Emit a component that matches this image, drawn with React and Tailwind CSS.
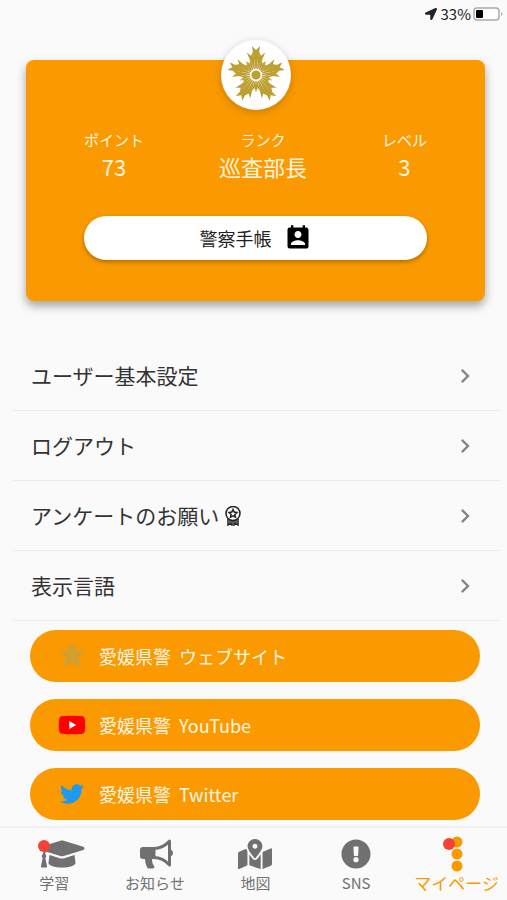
import { FaExclamationCircle, FaGraduationCap, FaLocationArrow, FaMapMarkedAlt, FaTwitter, FaYoutube } from 'react-icons/fa';
import { MdChevronRight, MdPermContactCalendar } from 'react-icons/md';

// Ray lengths of one arm, repeated five times around the emblem
const RAYS = [29, 24, 17, 17, 24];

function Emblem({ className, color, gap }) {
    const rays = Array.from({ length: 25 }, (_, i) => ({ angle: i * 14.4, r: RAYS[i % 5] }));

    return (
        <svg className={className} viewBox="-30 -30 60 60" aria-hidden="true">
            {rays.map(({ angle, r }) => {
                const w = r * 0.14;
                return (
                    <path
                        key={angle}
                        transform={`rotate(${angle})`}
                        fill={color}
                        d={`M-0.5 -6 L${-w * 0.72} ${-r * 0.75} L${-w} ${-r} L0 ${-r + 4} L${w} ${-r} L${w * 0.72} ${-r * 0.75} L0.5 -6 Z`}
                    />
                );
            })}
            <circle r="6" fill={gap} />
            <circle r="4.6" fill={color} />
        </svg>
    );
}

function RosetteIcon() {
    return (
        <svg className="w-5 h-5" viewBox="0 0 20 20" fill="none" stroke="#222" strokeWidth="1.5" aria-hidden="true">
            <circle cx="10" cy="7.5" r="7" />
            <path d="M10 3.6l1.2 2.5 2.7.4-2 1.9.5 2.7-2.4-1.3-2.4 1.3.5-2.7-2-1.9 2.7-.4z" />
            <path d="M5 13v6l2.4-1.4L9 19v-5M15 13v6l-2.4-1.4L11 19v-5M7 14v3M13 14v3" />
        </svg>
    );
}

function MegaphoneIcon() {
    return (
        <svg className="w-[34px] h-[30px]" viewBox="0 0 34 30" fill="currentColor" aria-hidden="true">
            <path d="M3 8h12v12H3a3 3 0 0 1-3-3v-6a3 3 0 0 1 3-3z" />
            <path d="M5 19h7c0 3 0 5 2 8 1 1.500 0 2.500-1 2.500H8.500C7 29.500 5 24 5 19z" />
            <path d="M14 9.500c6 0 11-2.500 15.500-7.500v24c-4.500-5-9.500-7.500-15.500-7.500z" fill="none" stroke="currentColor" strokeWidth="3" strokeLinejoin="round" />
            <path d="M30 10.500c4 .5 4 6.500 0 7z" />
        </svg>
    );
}

function StatusBar() {
    return (
        <div className="flex items-center justify-end h-7 pr-1 text-[15px] text-[#222]">
            <FaLocationArrow className="w-3 h-3 mr-1" />
            <span>33%</span>
            <svg className="w-[30px] h-4 ml-0.5" viewBox="0 0 30 16" aria-hidden="true">
                <rect x="1" y="2" width="25" height="12" rx="3" fill="#fff" stroke="#aaa" strokeWidth="1.4" />
                <rect x="3" y="4" width="7" height="8" rx="1" fill="#000" />
                <path d="M28 6v4c2-1 2-3 0-4z" fill="#aaa" />
            </svg>
        </div>
    );
}

function Stat({ label, value }) {
    return (
        <div className="flex flex-col items-center">
            <dt className="text-[15px] leading-5">{label}</dt>
            <dd className="text-[22px] leading-8">{value}</dd>
        </div>
    );
}

function ProfileCard() {
    return (
        <section className="relative mt-8 ml-[26px] mr-[22px] px-[58px] pt-[70px] pb-[41px] rounded-lg bg-[#fa9a00] text-[#fff5e4] shadow-[0_5px_10px_rgba(0,0,0,0.35)]">
            {/* Emblem sits over the top edge of the card */}
            <div className="absolute left-1/2 -top-5 -translate-x-1/2 flex items-center justify-center w-[70px] h-[70px] rounded-full bg-white shadow-[0_2px_8px_rgba(0,0,0,0.2)]">
                <Emblem className="w-[60px] h-[60px]" color="#bd9f32" gap="#fff" />
            </div>
            <dl className="flex justify-between">
                <Stat label="ポイント" value="73" />
                <Stat label="ランク" value="巡査部長" />
                <Stat label="レベル" value="3" />
            </dl>
            <button className="flex items-center justify-center gap-3 w-full h-11 mt-[34px] rounded-full bg-white text-[#222] text-lg shadow-[0_2px_4px_rgba(0,0,0,0.3)]">
                警察手帳
                <MdPermContactCalendar className="w-7 h-7 text-black" />
            </button>
        </section>
    );
}

function MenuRow({ children }) {
    return (
        <li className="border-b border-[#ebebeb]">
            <button className="flex items-center justify-between w-full h-[69px] pl-[18px] pr-[22px] text-[21px] text-[#333] text-left">
                <span className="flex items-center gap-1">{children}</span>
                <MdChevronRight className="w-7 h-7 text-[#858585]" />
            </button>
        </li>
    );
}

function SiteLink({ icon, name }) {
    return (
        <a href="#" className="flex items-center gap-2 h-[52px] pl-7 rounded-full bg-[#fa9a00] text-[#fff5e4] text-lg">
            <span className="flex items-center justify-center w-7 mr-[5px]">{icon}</span>
            <span>愛媛県警</span>
            <span>{name}</span>
        </a>
    );
}

function YoutubeIcon() {
    return (
        <span className="relative flex items-center justify-center">
            <span className="absolute w-3 h-3 bg-white" />
            <FaYoutube className="relative w-7 h-7 text-[#f00]" />
        </span>
    );
}

function NavItem({ icon, label, active = false, badge = '', iconClass = '' }) {
    return (
        <a
            href="#"
            aria-current={active ? 'page' : undefined}
            className={`flex flex-1 flex-col items-center whitespace-nowrap ${active ? 'text-[#fa9a00] text-[17px]' : 'text-[#707070] text-[15px]'}`}
        >
            <span className={`flex items-center justify-center h-9 ${iconClass}`}>
                <span className="relative">
                    {icon}
                    {badge && <span className={`absolute w-3 h-3 rounded-full bg-[#f44336] ${badge}`} />}
                </span>
            </span>
            <span className="leading-[22px]">{label}</span>
        </a>
    );
}

export default function App() {
    return (
        <div className="flex flex-col min-h-screen bg-[#fafafa] font-['Noto_Sans_CJK_JP',sans-serif]">
            <StatusBar />
            <main className="flex-1 pb-1.5">
                <ProfileCard />
                <ul className="mt-10 ml-[13px] mr-1.5">
                    <MenuRow>ユーザー基本設定</MenuRow>
                    <MenuRow>ログアウト</MenuRow>
                    <MenuRow>アンケートのお願い<RosetteIcon /></MenuRow>
                    <MenuRow>表示言語</MenuRow>
                </ul>
                <div className="flex flex-col gap-[17px] mt-[9px] ml-[30px] mr-[27px]">
                    <SiteLink icon={<Emblem className="w-[26px] h-[26px]" color="#c9a03c" gap="#d8a02a" />} name="ウェブサイト" />
                    <SiteLink icon={<YoutubeIcon />} name="YouTube" />
                    <SiteLink icon={<FaTwitter className="w-6 h-6 text-[#1d9bf0]" />} name="Twitter" />
                </div>
            </main>
            <nav className="sticky bottom-0 flex h-[74px] pt-2 pl-1 border-t-2 border-[#f1f1f1] bg-[#fafafa]">
                <NavItem icon={<FaGraduationCap className="w-12 h-9" />} label="学習" iconClass="pl-4" badge="left-0 top-1" />
                <NavItem icon={<MegaphoneIcon />} label="お知らせ" iconClass="pl-1" />
                <NavItem icon={<FaMapMarkedAlt className="w-[34px] h-[34px]" />} label="地図" />
                <NavItem icon={<FaExclamationCircle className="w-[30px] h-[30px]" />} label="SNS" />
                <NavItem
                    active
                    label="マイページ"
                    badge="-left-2 top-0.5"
                    icon={
                        <svg className="w-3 h-9" viewBox="0 0 12 36" fill="currentColor" aria-hidden="true">
                            <circle cx="6" cy="6" r="5.5" />
                            <circle cx="6" cy="18" r="5.5" />
                            <circle cx="6" cy="30" r="5.5" />
                        </svg>
                    }
                />
            </nav>
        </div>
    );
}
